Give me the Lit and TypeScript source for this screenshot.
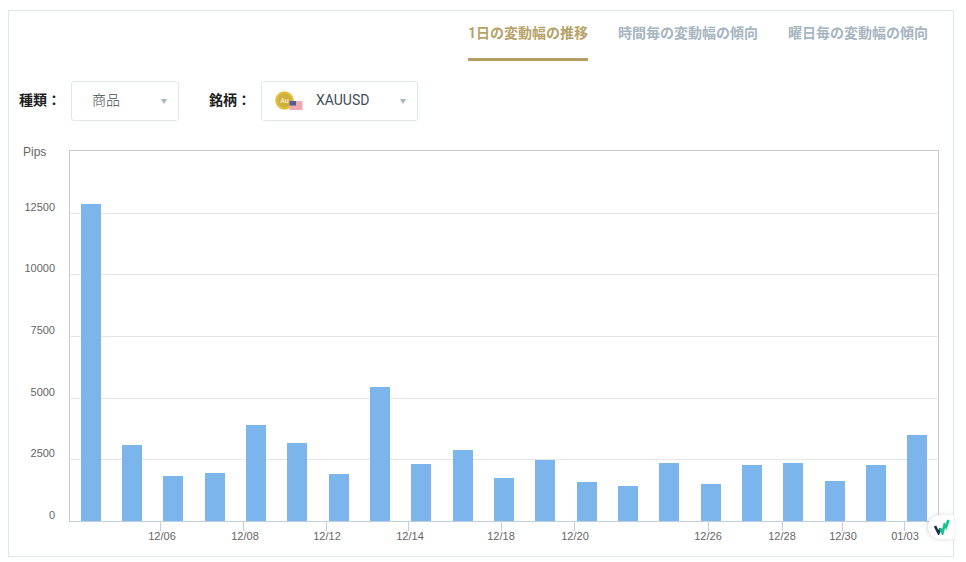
import { LitElement, html, css, svg } from "lit";
import { customElement } from "lit/decorators.js";

const BAR_TOPS = [204, 445, 476, 473, 425, 443, 474, 387, 464, 450, 478, 460, 482, 486, 463, 484, 465, 463, 481, 465, 435];
const BAR_X = [81, 122, 163, 205, 246, 287, 329, 370, 411, 453, 494, 535, 577, 618, 659, 701, 742, 783, 825, 866, 907];
const GRID: [number, string][] = [[213.5, "12500"], [274.5, "10000"], [336.5, "7500"], [398.5, "5000"], [459.5, "2500"]];
const TICKS: [number, number, string][] = [
  [160.5, 162, "12/06"], [243.5, 245, "12/08"], [326.5, 327, "12/12"], [408.5, 410, "12/14"],
  [501.5, 501, "12/18"], [574.5, 575, "12/20"], [708.5, 708, "12/26"], [782.5, 782, "12/28"],
  [842.5, 843, "12/30"], [904.5, 905, "01/03"],
];

@customElement("app-root")
export class AppRoot extends LitElement {
  static styles = css`
    :host {
      display: block;
      width: 966px;
      height: 562px;
      background: #fff;
      font-family: Roboto, "Noto Sans CJK JP", sans-serif;
      overflow: hidden;
    }
    .page { padding: 10px 12px 0 8px; }
    .card {
      position: relative;
      box-sizing: border-box;
      height: 547px;
      border: 1px solid #dfe8e8;
    }
    .tabs {
      display: flex;
      justify-content: flex-end;
      gap: 30px;
      padding-right: 25px;
      height: 50px;
    }
    .tab {
      box-sizing: border-box;
      height: 50px;
      padding-top: 12px;
      font-size: 14px;
      line-height: 20px;
      font-weight: 700;
      color: #a6b5c0;
    }
    .tab.active { color: #b5a268; border-bottom: 3px solid #b19d63; }
    .filters {
      display: flex;
      align-items: center;
      padding: 20px 0 0 10px;
      height: 40px;
    }
    .label { font-size: 14px; font-weight: 700; color: #1d1d1d; width: 52px; line-height: 20px; margin-top: -3px; }
    .label.second { width: 52px; margin-left: 30px; }
    .select {
      box-sizing: border-box;
      height: 40px;
      border: 1px solid #dfe8e8;
      border-radius: 3px;
      display: flex;
      align-items: center;
      font-size: 14px;
      color: #444d55;
      position: relative;
      padding-bottom: 4px;
    }
    .select.kind { width: 108px; padding-left: 20px; font-weight: 300; }
    .select.pair { width: 157px; padding-left: 13px; padding-bottom: 2px; }
    .pair svg { margin-right: 13px; margin-top: 2px; }
    .caret {
      position: absolute;
      right: 11px;
      top: 17px;
      width: 0;
      height: 0;
      border-left: 3.5px solid transparent;
      border-right: 3.5px solid transparent;
      border-top: 5px solid #a9b4bd;
    }
    .chart {
      position: absolute;
      left: -1px;
      top: -1px;
      display: block;
      font-family: "Liberation Sans", Arial, sans-serif;
    }
    .yl { font-size: 11px; fill: #666; text-anchor: end; }
    .xl { font-size: 11px; fill: #666; text-anchor: middle; }
    .pips { font-size: 12px; fill: #666; }
    .badge {
      position: absolute;
      left: 919px;
      top: 504px;
      width: 26px;
      height: 24px;
      background: #fff;
      border-radius: 12px 0 0 12px;
      box-shadow: -1px 0 5px rgba(0, 0, 0, 0.15);
      display: flex;
      align-items: center;
      padding-left: 6px;
      box-sizing: border-box;
    }
  `;

  private chart() {
    return svg`
      <svg class="chart" width="958" height="548" viewBox="8 10 958 548">
        <text class="pips" x="23" y="156">Pips</text>
        <rect x="69.5" y="150.5" width="869" height="371" fill="none" stroke="#cccccc"/>
        ${GRID.map(([y, t]) => svg`
          <line x1="70" x2="938" y1=${y} y2=${y} stroke="#e6e6e6"/>
          <text class="yl" x="55" y=${y - 3}>${t}</text>`)}
        <text class="yl" x="55" y="519">0</text>
        ${BAR_X.map((x, i) => svg`<rect x=${x} y=${BAR_TOPS[i]} width="20" height=${521 - BAR_TOPS[i]} fill="#7cb5ec"/>`)}
        <line x1="69" x2="939" y1="521.5" y2="521.5" stroke="#c0d0e0"/>
        ${TICKS.map(([tx, lx, t]) => svg`
          <line x1=${tx} x2=${tx} y1="522" y2="531" stroke="#c0d0e0"/>
          <text class="xl" x=${lx} y="540">${t}</text>`)}
      </svg>`;
  }

  render() {
    return html`
      <div class="page">
        <div class="card">
          ${this.chart()}
          <div class="tabs">
            <div class="tab active">1日の変動幅の推移</div>
            <div class="tab">時間毎の変動幅の傾向</div>
            <div class="tab">曜日毎の変動幅の傾向</div>
          </div>
          <div class="filters">
            <div class="label">種類：</div>
            <div class="select kind">商品<span class="caret"></span></div>
            <div class="label second">銘柄：</div>
            <div class="select pair">
              <svg width="28" height="20" viewBox="0 0 28 20">
                <circle cx="9.5" cy="9.5" r="9.3" fill="#e3bf37"/>
                <circle cx="9.5" cy="9.5" r="7" fill="#cdb040"/>
                <text x="9.5" y="12" font-size="7" font-weight="700" text-anchor="middle" fill="#f3e6b5">Au</text>
                <rect x="14.5" y="10" width="13" height="9" fill="#efa9b4"/>
                <rect x="14.5" y="10" width="6.5" height="4.5" fill="#555a8c"/>
              </svg>
              XAUUSD<span class="caret"></span>
            </div>
          </div>
          <div class="badge">
            <svg width="16" height="16" viewBox="0 0 16 16">
              <path d="M1 7 L4.5 14 L6.5 9.5" fill="none" stroke="#16324f" stroke-width="2.6"/>
              <path d="M6.5 9.5 L8.5 14 L10.5 6 L12 8 L14.5 1" fill="none" stroke="#12c48b" stroke-width="2.6"/>
            </svg>
          </div>
        </div>
      </div>
    `;
  }
}
